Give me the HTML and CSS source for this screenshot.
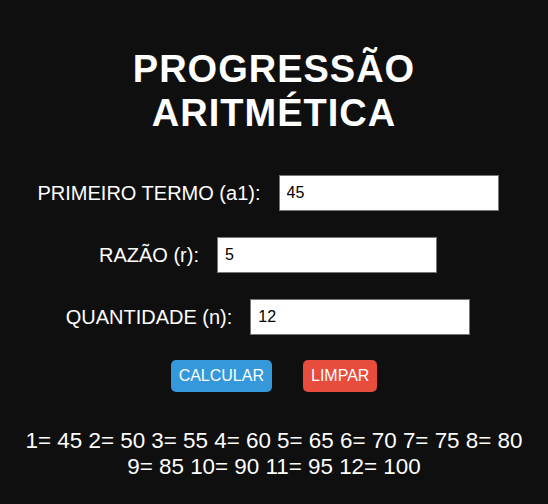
FILE: index.html
```html
<!DOCTYPE html>
<html lang="pt-BR">
<head>
<meta charset="utf-8">
<title>Progressão Aritmética</title>
<link rel="stylesheet" href="styles.css">
</head>
<body>
<main class="app">
  <h1 class="title">PROGRESSÃO<br>ARITMÉTICA</h1>
  <div class="form">
    <div class="row">
      <label class="label" for="a1">PRIMEIRO TERMO (a1):</label>
      <input class="field" id="a1" type="text" value="45">
    </div>
    <div class="row">
      <label class="label" for="r">RAZÃO (r):</label>
      <input class="field" id="r" type="text" value="5">
    </div>
    <div class="row">
      <label class="label" for="n">QUANTIDADE (n):</label>
      <input class="field" id="n" type="text" value="12">
    </div>
  </div>
  <div class="actions">
    <button class="btn btn-calc" type="button">CALCULAR</button>
    <button class="btn btn-clear" type="button">LIMPAR</button>
  </div>
  <p class="result"><span class="term">1= 45</span> <span class="term">2= 50</span> <span class="term">3= 55</span> <span class="term">4= 60</span> <span class="term">5= 65</span> <span class="term">6= 70</span> <span class="term">7= 75</span> <span class="term">8= 80</span> <span class="term">9= 85</span> <span class="term">10= 90</span> <span class="term">11= 95</span> <span class="term">12= 100</span></p>
</main>
</body>
</html>
```
FILE: styles.css
```css
html, body {
  margin: 0;
  padding: 0;
  background: #0f0f0f;
}
body {
  font-family: "Liberation Sans", Arial, sans-serif;
  color: #ffffff;
}
.app {
  display: flex;
  flex-direction: column;
  align-items: center;
  padding: 47px 10px 0;
  text-align: center;
}
.title {
  margin: 0;
  font-size: 38px;
  line-height: 44px;
  font-weight: bold;
  letter-spacing: 1px;
}
.form {
  display: flex;
  flex-direction: column;
  gap: 26px;
  margin-top: 40px;
  width: 100%;
}
.row {
  display: flex;
  justify-content: center;
  align-items: center;
  gap: 18px;
  height: 36px;
}
.label {
  font-size: 20px;
}
.field {
  box-sizing: border-box;
  width: 220px;
  height: 36px;
  margin: 0 12px 0 0;
  padding: 0 7px;
  border: 1px solid #767676;
  background: #ffffff;
  color: #000000;
  font-family: "Liberation Sans", Arial, sans-serif;
  font-size: 16px;
  outline: none;
}
.actions {
  display: flex;
  justify-content: center;
  gap: 31px;
  margin-top: 25px;
}
.btn {
  height: 32px;
  padding: 0 8px;
  border: none;
  border-radius: 5px;
  color: #ffffff;
  font-family: "Liberation Sans", Arial, sans-serif;
  font-size: 16px;
}
.btn-calc {
  background: #3498db;
}
.btn-clear {
  background: #e74c3c;
}
.result {
  margin: 36px 0 0;
  padding: 0 10px;
  font-size: 22.4px;
  line-height: 26px;
}
.term {
  white-space: nowrap;
}
```
